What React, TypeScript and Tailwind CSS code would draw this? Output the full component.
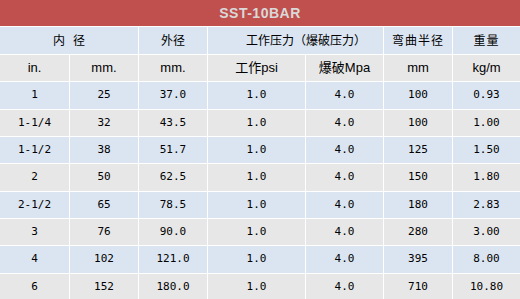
import React from "react";

const rows: string[][] = [
  ["1", "25", "37.0", "1.0", "4.0", "100", "0.93"],
  ["1-1/4", "32", "43.5", "1.0", "4.0", "100", "1.00"],
  ["1-1/2", "38", "51.7", "1.0", "4.0", "125", "1.50"],
  ["2", "50", "62.5", "1.0", "4.0", "150", "1.80"],
  ["2-1/2", "65", "78.5", "1.0", "4.0", "180", "2.83"],
  ["3", "76", "90.0", "1.0", "4.0", "280", "3.00"],
  ["4", "102", "121.0", "1.0", "4.0", "395", "8.00"],
  ["6", "152", "180.0", "1.0", "4.0", "710", "10.80"],
];

const cjk = "font-['Liberation_Sans','Noto_Sans_CJK_SC',sans-serif]";
const mono = "font-['DejaVu_Sans_Mono','Noto_Sans_CJK_SC',monospace]";

export default function App() {
  return (
    <div className="w-[520px] h-[299px] bg-white overflow-hidden">
      <div className="h-[26px] bg-[#c0504d] flex items-center justify-center">
        <span className="font-['Liberation_Sans',sans-serif] font-bold text-[14px] tracking-[0.5px] text-[#d9d9d9]">
          SST-10BAR
        </span>
      </div>
      <div className="mt-px grid grid-cols-[69px_68px_68px_97px_77px_68px_67px] grid-rows-[27px_26px_27px_26px_26px_27px_26px_26px_27px_26px] gap-px text-black">
        <div className={`col-span-2 bg-[#dbe5f1] flex items-center justify-center text-[12px] ${cjk}`}>
          <span>内</span>
          <span className="ml-[8px]">径</span>
        </div>
        <div className={`bg-[#dbe5f1] flex items-center justify-center text-[12px] ${cjk}`}>外径</div>
        <div className={`col-span-2 bg-[#dbe5f1] flex items-center justify-center pl-[21px] text-[12px] ${cjk}`}>工作压力（爆破压力）</div>
        <div className={`bg-[#dbe5f1] flex items-center justify-center text-[12px] tracking-[1px] ${cjk}`}>弯曲半径</div>
        <div className={`bg-[#dbe5f1] flex items-center justify-center text-[12px] tracking-[1px] ${cjk}`}>重量</div>

        {["in.", "mm.", "mm.", "工作psi", "爆破Mpa", "mm", "kg/m"].map((t, i) => (
          <div key={i} className={`bg-[#e7e7e7] flex items-center justify-center text-[13px] ${cjk}`}>
            {t}
          </div>
        ))}

        {rows.map((r, ri) =>
          r.map((c, ci) => (
            <div
              key={`${ri}-${ci}`}
              className={`${ri % 2 === 0 ? "bg-[#dbe5f1]" : "bg-[#e7e7e7]"} flex items-center justify-center text-[11px] ${mono}`}
            >
              {c}
            </div>
          ))
        )}
      </div>
    </div>
  );
}
